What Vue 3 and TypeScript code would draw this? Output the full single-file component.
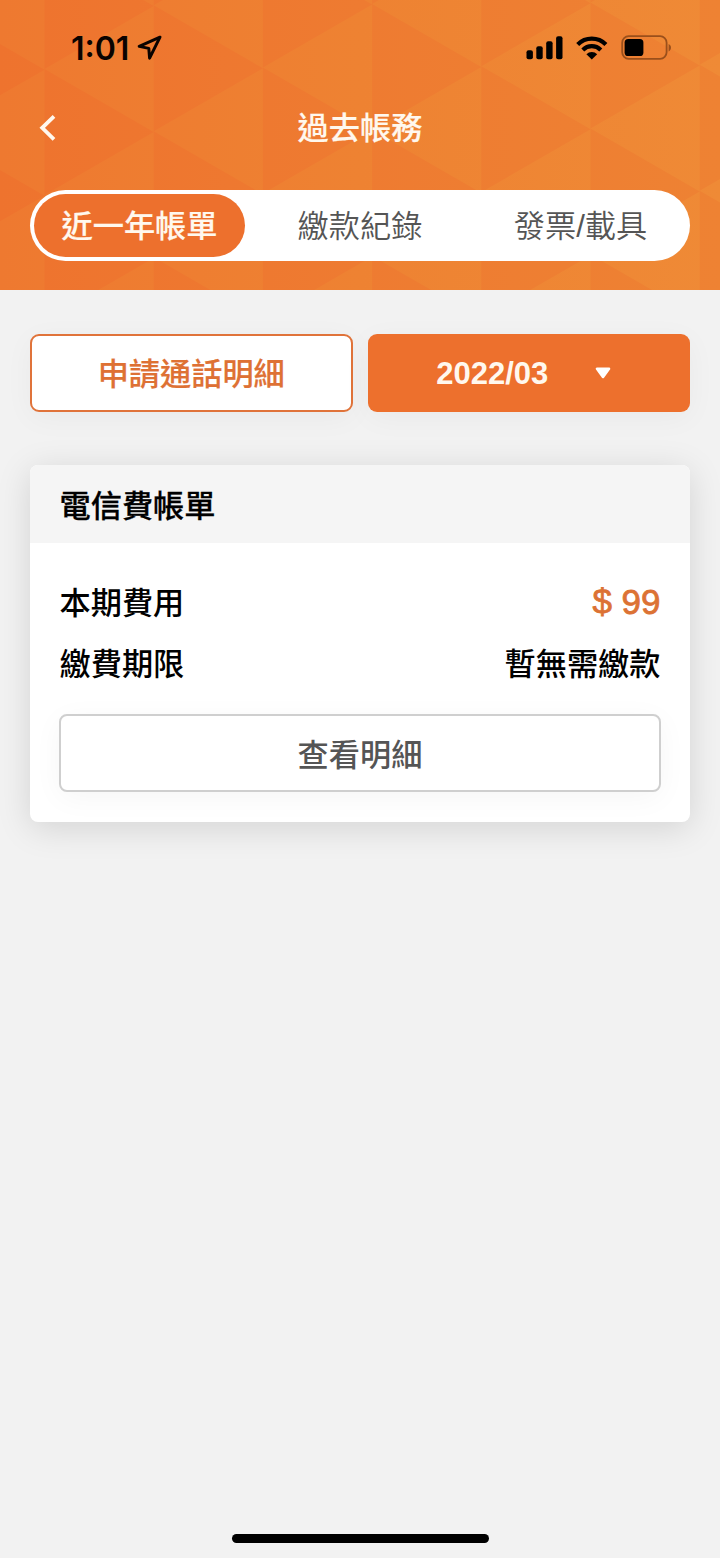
<script setup lang="ts">
import { ref } from 'vue'

const tabs: string[] = ['近一年帳單', '繳款紀錄', '發票/載具']
const active = ref(0)

// Triangular mosaic of the header: columns of interlocking left/right triangles.
const PITCH_X = 109.2
const PITCH_Y = 126
const left: string[] = []
for (let c = -1; c < 7; c++) {
  const x0 = 44.5 + c * PITCH_X
  const x1 = x0 + PITCH_X
  const odd = Math.abs(c) % 2 === 1
  const drift = -0.7 * c
  for (let r = -2; r < 4; r++) {
    const y = 69 + drift + r * PITCH_Y + (odd ? -PITCH_Y / 2 : 0)
    left.push(`M${x0} ${y}L${x1} ${y - PITCH_Y / 2}V${y + PITCH_Y / 2}Z`)
  }
}
const lightPath = left.join('')
</script>

<template>
  <div class="screen">
    <header class="hero">
      <svg class="mosaic" width="720" height="290" viewBox="0 0 720 290" aria-hidden="true">
        <defs>
          <linearGradient id="dark" gradientUnits="userSpaceOnUse" x1="0" y1="0" x2="720" y2="0">
            <stop offset="0" stop-color="#ee732e" />
            <stop offset="0.5" stop-color="#ee7b31" />
            <stop offset="1" stop-color="#ee8233" />
          </linearGradient>
          <linearGradient id="light" gradientUnits="userSpaceOnUse" x1="0" y1="0" x2="720" y2="0">
            <stop offset="0" stop-color="#ee7930" />
            <stop offset="0.5" stop-color="#ee8232" />
            <stop offset="1" stop-color="#ef8a36" />
          </linearGradient>
        </defs>
        <rect width="720" height="290" fill="url(#dark)" />
        <path :d="lightPath" fill="url(#light)" />
      </svg>

      <div class="status">
        <div class="clock">
          <span class="time">1:01</span>
          <svg class="locate" width="26" height="26" viewBox="0 0 26 26">
            <path d="M23 2.2 2.2 11.4l9.6 2 .8 9.8Z" fill="none" stroke="#0a0300" stroke-width="3" stroke-linejoin="round" />
          </svg>
        </div>
        <div class="indicators">
          <svg width="38" height="24" viewBox="0 0 38 24">
            <rect x="0.5" y="14.2" width="6.4" height="9" rx="2" />
            <rect x="10.3" y="10.2" width="6.4" height="13" rx="2" />
            <rect x="20.2" y="5.2" width="6.4" height="18" rx="2" />
            <rect x="30.1" y="0.2" width="6.4" height="23" rx="2" />
          </svg>
          <svg class="wifi" width="32" height="24" viewBox="0 0 32 24">
            <g fill="none" stroke="#000" stroke-width="4.2">
              <path d="M1.7 8.4a20 20 0 0 1 28.2 0" />
              <path d="M6.8 13.9a12.8 12.8 0 0 1 18 0" />
            </g>
            <path d="M15.8 23.5 10.4 18.2a7.6 7.6 0 0 1 10.8 0Z" />
          </svg>
          <svg class="battery" width="52" height="26" viewBox="0 0 52 26">
            <rect x="1.2" y="1.2" width="44.4" height="22.6" rx="6.5" fill="none" stroke="#9a4f1b" stroke-width="1.8" />
            <rect x="3.6" y="4" width="18.8" height="17" rx="3.6" />
            <path d="M47.6 9v7.4c3.2-1.4 3.2-6 0-7.4Z" fill="#9a4f1b" />
          </svg>
        </div>
      </div>

      <div class="nav">
        <button class="back" aria-label="返回">
          <svg width="18" height="28" viewBox="0 0 18 28">
            <path d="M15 2.3 3.2 13.8 15 25.3" fill="none" stroke="#fff8ee" stroke-width="3.8" />
          </svg>
        </button>
        <h1 class="title">過去帳務</h1>
      </div>

      <div class="tabs">
        <button
          v-for="(tab, i) in tabs"
          :key="tab"
          class="tab"
          :class="{ active: active === i }"
          @click="active = i"
        ><span>{{ tab }}</span></button>
      </div>
    </header>

    <main class="content">
      <div class="actions">
        <button class="btn outline"><span>申請通話明細</span></button>
        <button class="btn solid">
          <span class="month">2022/03</span>
          <svg width="16" height="12" viewBox="0 0 16 12">
            <path d="M2 1.8h12L8 10Z" fill="#fff" stroke="#fff" stroke-width="2.6" stroke-linejoin="round" />
          </svg>
        </button>
      </div>

      <section class="card">
        <h2 class="card-head">電信費帳單</h2>
        <div class="card-body">
          <div class="row"><span>本期費用</span><span class="amount">$ 99</span></div>
          <div class="row"><span>繳費期限</span><span>暫無需繳款</span></div>
          <button class="detail"><span>查看明細</span></button>
        </div>
      </section>
    </main>

    <div class="home-bar"></div>
  </div>
</template>

<style>
body {
  margin: 0;
  background: #f2f2f2;
}
</style>

<style scoped>
.screen {
  box-sizing: border-box;
  width: 720px;
  height: 1558px;
  display: flex;
  flex-direction: column;
  background: #f2f2f2;
  overflow: hidden;
  color: #000;
  font-family: "Liberation Sans", "Noto Sans CJK TC", sans-serif;
  font-size: 31.2px;
}
button {
  margin: 0;
  padding: 0;
  border: 0;
  background: none;
  font: inherit;
  color: inherit;
}
h1, h2 {
  margin: 0;
  font-size: inherit;
}
svg {
  display: block;
  flex: none;
}
.hero {
  position: relative;
  z-index: 0;
  height: 290px;
  box-sizing: border-box;
  padding: 0 30px;
}
.mosaic {
  position: absolute;
  inset: 0;
  z-index: -1;
}
.status {
  box-sizing: border-box;
  height: 96px;
  display: flex;
  align-items: center;
  justify-content: space-between;
  padding: 0 17.5px 0 41px;
}
.clock {
  display: flex;
  align-items: center;
  gap: 7.5px;
}
.time {
  font-family: Inter, sans-serif;
  font-weight: 600;
  font-size: 32px;
  line-height: 40px;
  padding-top: 2px;
  color: #0a0300;
}
.indicators {
  display: flex;
  align-items: center;
}
.wifi {
  margin-left: 12px;
}
.battery {
  margin-left: 13px;
}
.nav {
  height: 94px;
  display: flex;
  align-items: flex-start;
  justify-content: center;
  position: relative;
}
.back {
  position: absolute;
  left: 9px;
  top: 18px;
}
.title {
  color: #fff8ee;
  font-weight: 500;
  line-height: 46px;
  margin-top: 10px;
  -webkit-text-stroke: 0.2px #fff8ee;
}
.tabs {
  box-sizing: border-box;
  height: 71px;
  padding: 4px;
  border-radius: 36px;
  background: #fff;
  display: flex;
  justify-content: space-between;
}
.tab {
  flex: 0 0 211px;
  color: #555;
  font-weight: 350;
  border-radius: 32px;
  line-height: 61px;
  padding-top: 2px;
}
.tab.active {
  background: #ed702d;
  color: #fff8ee;
  font-weight: 500;
  -webkit-text-stroke: 0.2px #fff8ee;
}
.content {
  flex: 1;
  padding: 44px 30px 0;
}
.actions {
  display: grid;
  grid-template-columns: 1fr 1fr;
  gap: 15px;
}
.btn {
  box-sizing: border-box;
  height: 78px;
  border-radius: 9px;
  display: flex;
  align-items: center;
  justify-content: center;
  box-shadow: 0 6px 30px rgba(0, 0, 0, 0.04);
}
.outline {
  background: #fff;
  border: 2px solid #e0733a;
  color: #de7134;
  font-weight: 500;
  padding-bottom: 4px;
  -webkit-text-stroke: 0.2px #de7134;
}
.solid {
  background: #ed702d;
  color: #fff8ee;
  font-weight: 700;
  gap: 47px;
  padding-right: 10px;
}
.month {
  font-size: 31px;
  padding-top: 1px;
}
.card {
  margin-top: 53px;
  border-radius: 8px;
  background: #fff;
  box-shadow: 0 6px 34px rgba(0, 0, 0, 0.13);
}
.card-head {
  box-sizing: border-box;
  height: 78px;
  padding: 3px 29.5px 0;
  line-height: 78px;
  font-weight: 500;
  background: #f5f5f5;
  border-radius: 8px 8px 0 0;
  -webkit-text-stroke: 0.3px #000;
}
.card-body {
  padding: 27px 29px 30px;
}
.row {
  display: flex;
  justify-content: space-between;
  align-items: center;
  height: 61px;
  padding: 0 0.5px;
  font-weight: 500;
}
.amount {
  color: #dc7234;
  font-size: 35px;
  font-weight: 400;
  padding-top: 2px;
  -webkit-text-stroke: 0.8px #dc7234;
}
.detail {
  box-sizing: border-box;
  width: 100%;
  height: 78px;
  margin-top: 22px;
  padding-bottom: 1px;
  display: flex;
  align-items: center;
  justify-content: center;
  border: 2px solid #cfcfcf;
  border-radius: 8px;
  background: #fff;
  color: #555;
  font-weight: 500;
  box-shadow: 0 6px 30px rgba(0, 0, 0, 0.04);
}
.home-bar {
  width: 257px;
  height: 9px;
  border-radius: 5px;
  background: #000;
  margin: 0 auto 15px;
}
</style>
